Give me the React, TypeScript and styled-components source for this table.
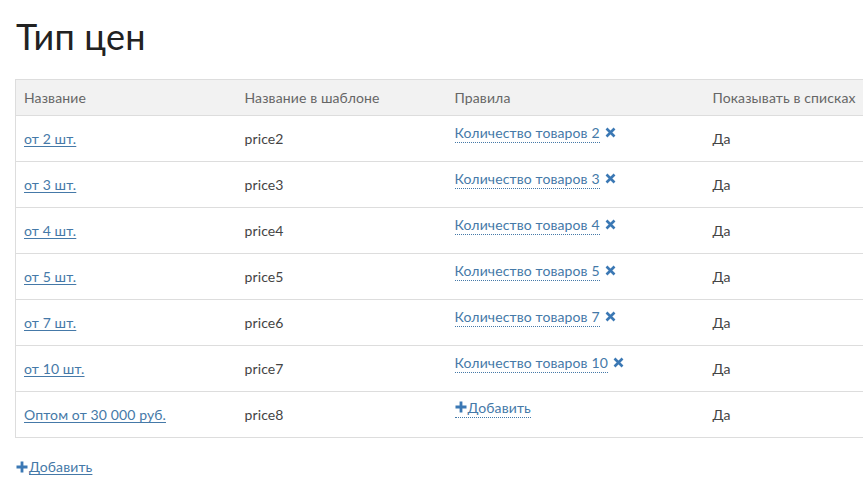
import React from "react";
import styled, { createGlobalStyle } from "styled-components";

const Global = createGlobalStyle`
  html, body { margin: 0; padding: 0; background: #fff; overflow: hidden; }
  body { font-family: Lato, "Open Sans", sans-serif; color: #333; }
`;

const Page = styled.div`
  padding: 0 0 0 15px;
  width: 900px;
`;

const Title = styled.h1`
  margin: 0;
  padding: 14px 0 0 1px;
  height: 79px;
  box-sizing: border-box;
  font-size: 36px;
  font-weight: 400;
  line-height: 44px;
  color: #222;
  letter-spacing: 0.2px;
`;

const Table = styled.table`
  border-collapse: collapse;
  width: 900px;
  table-layout: fixed;
  font-size: 14px;
  letter-spacing: 0.12px;
  border-left: 1px solid #ddd;
`;

const HeadCell = styled.th<{ $w?: number }>`
  ${(p) => (p.$w ? `width: ${p.$w}px;` : "")}
  height: 36px;
  padding: 0 8px;
  text-align: left;
  font-weight: 400;
  color: #666;
  background: #f2f2f2;
  border-top: 1px solid #ddd;
  border-bottom: 1px solid #ddd;
  box-sizing: border-box;
`;

const Cell = styled.td<{ $top?: boolean }>`
  height: 46px;
  padding: ${(p) => (p.$top ? "0 8px 13px" : "0 8px")};
  vertical-align: middle;
  border-bottom: 1px solid #ddd;
  color: #444;
  box-sizing: border-box;
  white-space: nowrap;
`;

const Link = styled.a`
  color: #4579a8;
  text-decoration: underline;
  text-underline-offset: 2px;
  cursor: pointer;
`;

const RuleLink = styled.a`
  color: #4579a8;
  text-decoration: none;
  border-bottom: 1px dotted #4579a8;
  padding-bottom: 1px;
  cursor: pointer;
`;

const Remove = styled.span`
  display: inline-block;
  margin-left: 5px;
  color: #3b78b4;
`;

const AddLink = styled.a<{ $solid?: boolean }>`
  display: inline-flex;
  align-items: center;
  color: #4579a8;
  cursor: pointer;
  letter-spacing: 0.12px;
  ${(p) =>
    p.$solid
      ? "text-decoration: underline; text-underline-offset: 2px;"
      : "text-decoration: none; border-bottom: 1px dotted #4579a8; padding-bottom: 1px;"}
`;

const Footer = styled.div`
  padding: 20px 0 0 1px;
  font-size: 14px;
`;

const Cross = () => (
  <svg width="11" height="11" viewBox="0 0 11 11">
    <path d="M1.5 1.5 L9.5 9.5 M9.5 1.5 L1.5 9.5" stroke="#3b78b4" strokeWidth="2.6" strokeLinecap="butt" />
  </svg>
);

const Plus = () => (
  <svg width="12" height="12" viewBox="0 0 12 12" style={{ marginRight: 1 }}>
    <path d="M6 0.5 V11.5 M0.5 6 H11.5" stroke="#3b78b4" strokeWidth="2.8" />
  </svg>
);

const rows = [
  { name: "от 2 шт.", code: "price2", rule: "Количество товаров 2" },
  { name: "от 3 шт.", code: "price3", rule: "Количество товаров 3" },
  { name: "от 4 шт.", code: "price4", rule: "Количество товаров 4" },
  { name: "от 5 шт.", code: "price5", rule: "Количество товаров 5" },
  { name: "от 7 шт.", code: "price6", rule: "Количество товаров 7" },
  { name: "от 10 шт.", code: "price7", rule: "Количество товаров 10" },
  { name: "Оптом от 30 000 руб.", code: "price8", rule: null },
];

export default function App() {
  return (
    <Page>
      <Global />
      <Title>Тип цен</Title>
      <Table>
        <thead>
          <tr>
            <HeadCell $w={221}>Название</HeadCell>
            <HeadCell $w={210}>Название в шаблоне</HeadCell>
            <HeadCell $w={258}>Правила</HeadCell>
            <HeadCell>Показывать в списках</HeadCell>
          </tr>
        </thead>
        <tbody>
          {rows.map((r) => (
            <tr key={r.code}>
              <Cell>
                <Link>{r.name}</Link>
              </Cell>
              <Cell>{r.code}</Cell>
              <Cell $top>
                {r.rule ? (
                  <>
                    <RuleLink>{r.rule}</RuleLink>
                    <Remove>
                      <Cross />
                    </Remove>
                  </>
                ) : (
                  <AddLink>
                    <Plus />
                    Добавить
                  </AddLink>
                )}
              </Cell>
              <Cell>Да</Cell>
            </tr>
          ))}
        </tbody>
      </Table>
      <Footer>
        <AddLink $solid>
          <Plus />
          Добавить
        </AddLink>
      </Footer>
    </Page>
  );
}
